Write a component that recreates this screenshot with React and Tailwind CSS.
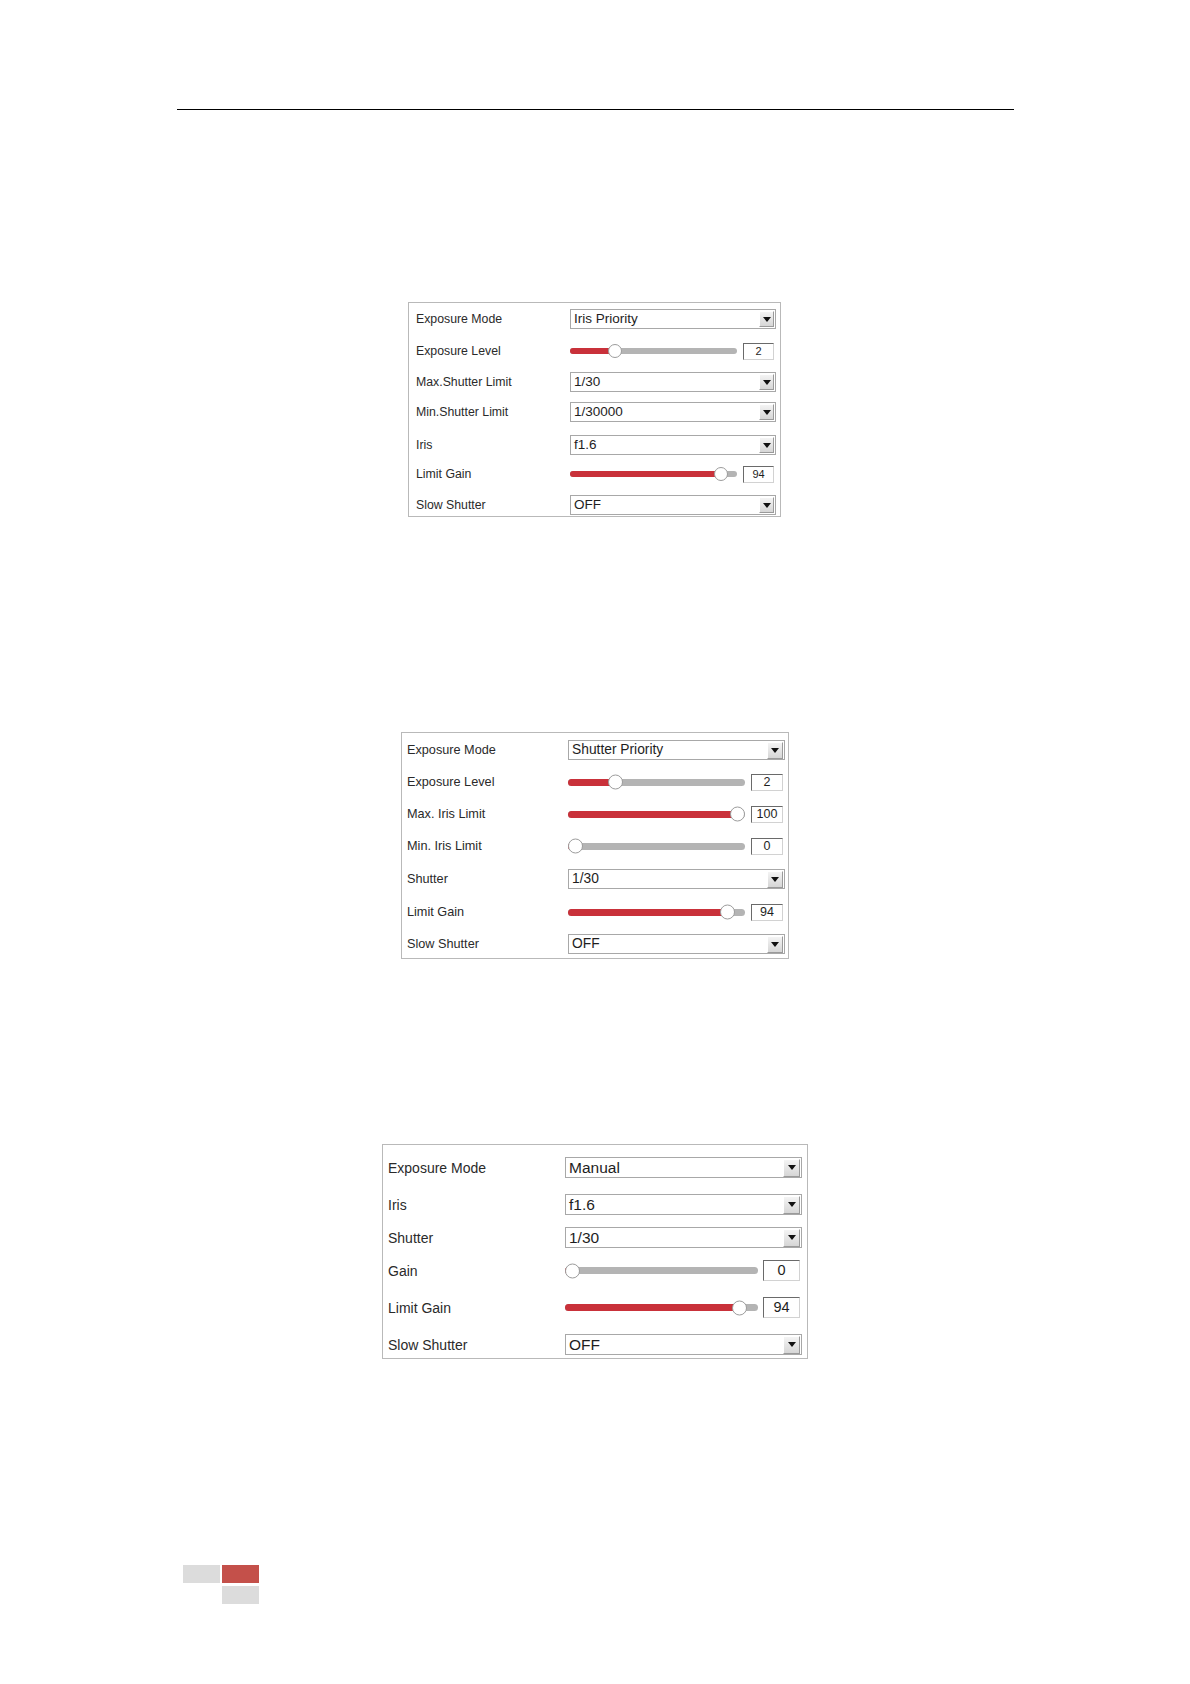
import React from 'react'

const font = { fontFamily: '"Liberation Sans", Arial, sans-serif' }

// per-panel sizing, since each screenshot in the manual was shot at a different scale
const panels = [
  {
    box: 'mt-[192px] ml-[408px] w-[373px] h-[215px] pt-[6px] pl-[7px]',
    rowH: 'h-[20px]',
    label: 'w-[154px] text-[12.3px]',
    select: 'w-[206px] h-[20px] text-[13.5px]',
    btn: 'w-[15px] h-[16px]',
    track: 'w-[167px] h-[6px]',
    thumb: 14,
    num: 'w-[31px] h-[17px] ml-[6px] text-[11px]',
    rows: [
      { label: 'Exposure Mode', type: 'select', value: 'Iris Priority', mt: 'mt-0' },
      { label: 'Exposure Level', type: 'slider', value: 2, pos: 0.25, mt: 'mt-[12px]' },
      { label: 'Max.Shutter Limit', type: 'select', value: '1/30', mt: 'mt-[11px]' },
      { label: 'Min.Shutter Limit', type: 'select', value: '1/30000', mt: 'mt-[10px]' },
      { label: 'Iris', type: 'select', value: 'f1.6', mt: 'mt-[13px]' },
      { label: 'Limit Gain', type: 'slider', value: 94, pos: 0.94, mt: 'mt-[9px]' },
      { label: 'Slow Shutter', type: 'select', value: 'OFF', mt: 'mt-[11px]' },
    ],
  },
  {
    box: 'mt-[215px] ml-[401px] w-[388px] h-[227px] pt-[7px] pl-[5px]',
    rowH: 'h-[20px]',
    label: 'w-[161px] text-[12.7px]',
    select: 'w-[217px] h-[20px] text-[13.8px]',
    btn: 'w-[16px] h-[17px]',
    track: 'w-[177px] h-[7px]',
    thumb: 15,
    num: 'w-[32px] h-[17px] ml-[6px] text-[12.5px]',
    rows: [
      { label: 'Exposure Mode', type: 'select', value: 'Shutter Priority', mt: 'mt-0' },
      { label: 'Exposure Level', type: 'slider', value: 2, pos: 0.245, mt: 'mt-[12px]' },
      { label: 'Max. Iris Limit', type: 'slider', value: 100, pos: 1, mt: 'mt-[12px]' },
      { label: 'Min. Iris Limit', type: 'slider', value: 0, pos: 0, mt: 'mt-[12px]' },
      { label: 'Shutter', type: 'select', value: '1/30', mt: 'mt-[13px]' },
      { label: 'Limit Gain', type: 'slider', value: 94, pos: 0.94, mt: 'mt-[13px]' },
      { label: 'Slow Shutter', type: 'select', value: 'OFF', mt: 'mt-[12px]' },
    ],
  },
  {
    box: 'mt-[185px] ml-[382px] w-[426px] h-[215px] pt-[12px] pl-[5px]',
    rowH: 'h-[21px]',
    label: 'w-[177px] text-[14px]',
    select: 'w-[237px] h-[21px] text-[15.5px]',
    btn: 'w-[17px] h-[18px]',
    track: 'w-[193px] h-[7px]',
    thumb: 15,
    num: 'w-[37px] h-[21px] ml-[5px] text-[14.5px]',
    rows: [
      { label: 'Exposure Mode', type: 'select', value: 'Manual', mt: 'mt-0' },
      { label: 'Iris', type: 'select', value: 'f1.6', mt: 'mt-[16px]' },
      { label: 'Shutter', type: 'select', value: '1/30', mt: 'mt-[12px]' },
      { label: 'Gain', type: 'slider', value: 0, pos: 0, mt: 'mt-[12px]' },
      { label: 'Limit Gain', type: 'slider', value: 94, pos: 0.94, mt: 'mt-[16px]' },
      { label: 'Slow Shutter', type: 'select', value: 'OFF', mt: 'mt-[16px]' },
    ],
  },
]

function Select({ value, p }) {
  return (
    <div className={`flex items-center justify-between border border-[#a8a8a8] bg-white pl-[3px] pr-[1px] text-[#1e1e1e] ${p.select}`}>
      <span className="leading-none">{value}</span>
      <span className={`flex items-center justify-center border border-t-white border-l-white border-r-[#9a9a9a] border-b-[#9a9a9a] bg-gradient-to-b from-[#f4f4f4] to-[#d6d6d6] ${p.btn}`}>
        <svg width="8" height="5" viewBox="0 0 8 5" aria-hidden>
          <path d="M0 0h8L4 5z" fill="#111" />
        </svg>
      </span>
    </div>
  )
}

function Slider({ value, pos, p }) {
  const trackW = parseInt(p.track.match(/w-\[(\d+)px\]/)[1], 10)
  const left = pos * (trackW - p.thumb)
  return (
    <div className="flex items-center">
      <div className={`relative rounded-full bg-[#b4b4b4] ${p.track}`}>
        <div
          className="absolute left-0 top-0 h-full rounded-full bg-[#c9313a]"
          style={{ width: left + p.thumb / 2 }}
        />
        <div
          className="absolute top-1/2 -translate-y-1/2 rounded-full border border-[#9c9c9c] bg-white"
          style={{ left, width: p.thumb, height: p.thumb }}
        />
      </div>
      <div className={`flex items-center justify-center border border-t-[#6a6a6a] border-l-[#6a6a6a] border-r-[#d2d2d2] border-b-[#d2d2d2] bg-white leading-none text-[#1e1e1e] ${p.num}`}>
        {value}
      </div>
    </div>
  )
}

function Panel({ p }) {
  return (
    <div className={`flex flex-col border border-[#b9b9b9] bg-white ${p.box}`}>
      {p.rows.map((r) => (
        <div key={r.label} className={`flex shrink-0 items-center ${p.rowH} ${r.mt}`}>
          <div className={`leading-none text-[#2a2a2a] ${p.label}`}>{r.label}</div>
          {r.type === 'select' ? <Select value={r.value} p={p} /> : <Slider value={r.value} pos={r.pos} p={p} />}
        </div>
      ))}
    </div>
  )
}

export default function App() {
  return (
    <div className="w-[1190px] h-[1684px] bg-white pt-[109px]" style={font}>
      <div className="ml-[177px] w-[837px] h-px bg-black" />
      {panels.map((p, i) => (
        <Panel key={i} p={p} />
      ))}
      <div className="mt-[206px] ml-[183px] flex flex-col gap-[3px]">
        <div className="flex gap-[2px]">
          <div className="w-[37px] h-[18px] bg-[#dcdcdc]" />
          <div className="w-[37px] h-[18px] bg-[#c4504a]" />
        </div>
        <div className="ml-[39px] w-[37px] h-[18px] bg-[#dcdcdc]" />
      </div>
    </div>
  )
}
